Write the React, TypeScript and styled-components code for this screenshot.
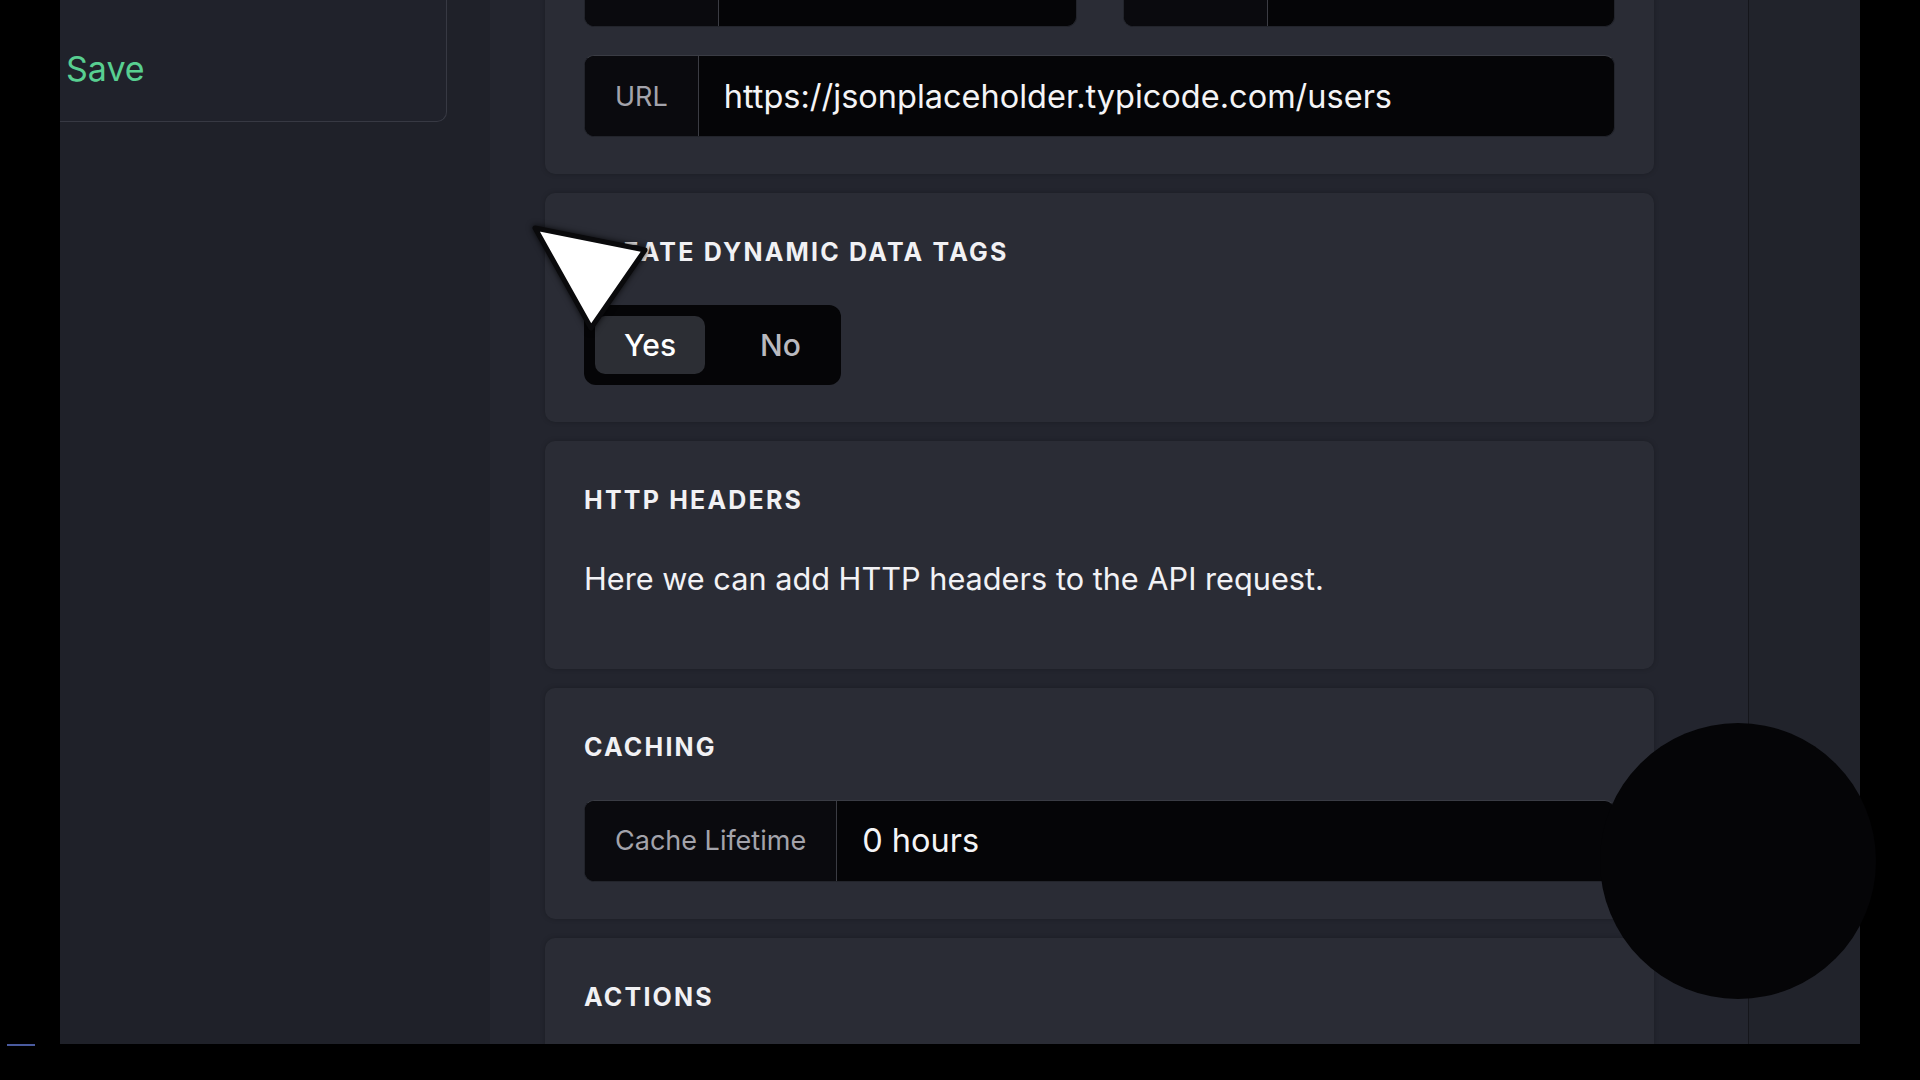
import React from "react";
import styled, { createGlobalStyle } from "styled-components";

const Global = createGlobalStyle`
  html, body { margin: 0; padding: 0; background: #000; }
  body { font-family: Inter, "Noto Sans", "Liberation Sans", sans-serif; color: #f2f2f4; overflow: hidden; }
  * { box-sizing: border-box; }
`;

const Screen = styled.div`
  width: 1920px;
  height: 1080px;
  background: #000;
  position: relative;
  overflow: hidden;
`;

const Frame = styled.div`
  display: flex;
  margin-left: 60px;
  width: 1800px;
  height: 1044px;
  overflow: hidden;
`;

const Sidebar = styled.aside`
  width: 430px;
  flex: none;
  background: #1f2129;
`;

const SidebarCard = styled.div`
  width: 387px;
  height: 122px;
  display: flex;
  align-items: flex-end;
  padding: 0 0 35px 6px;
  background: #20222b;
  border-right: 1.5px solid #373943;
  border-bottom: 1.5px solid #373943;
  border-bottom-right-radius: 10px;
`;

const SaveLink = styled.span`
  font-size: 34px;
  line-height: 1;
  color: #58cf91;
  font-weight: 400;
`;

const Main = styled.main`
  width: 1259px;
  flex: none;
  background: #23252e;
  border-right: 1px solid #15161b;
  padding: 0 94px 0 55px;
  overflow: hidden;
`;

const RightPanel = styled.div`
  flex: 1;
  background: #21232b;
`;

const Stack = styled.div`
  display: flex;
  flex-direction: column;
  gap: 19px;
  margin-top: -94px;
`;

const Card = styled.section<{ $top?: number; $minHeight?: number }>`
  background: #2a2c35;
  border-radius: 10px;
  box-shadow: 0 0 5px rgba(0, 0, 0, 0.22);
  padding: ${(p) => p.$top ?? 47}px 39px 37px;
  min-height: ${(p) => p.$minHeight ?? 0}px;
  display: flex;
  flex-direction: column;
`;

const Heading = styled.h2<{ $gap?: number }>`
  margin: 0 0 ${(p) => p.$gap ?? 40}px;
  font-size: 25px;
  line-height: 1;
  font-weight: 700;
  letter-spacing: 2.2px;
  color: #f1f1f4;
  text-transform: uppercase;
`;

const Description = styled.p`
  margin: 51px 0 37px;
  font-size: 30.7px;
  line-height: 1;
  color: #f2f2f5;
`;

const Row = styled.div`
  display: grid;
  grid-template-columns: 1fr 1fr;
  gap: 46px;
  margin-bottom: 28px;
`;

const InputGroup = styled.div`
  flex: none;
  display: flex;
  height: 82px;
  background: #050507;
  border-radius: 10px;
  border: 1px solid #22242b;
  border-top-color: #3a3c44;
  overflow: hidden;
`;

const GroupLabel = styled.span<{ $width?: number }>`
  display: flex;
  align-items: center;
  padding: 0 30px;
  ${(p) => (p.$width ? `width: ${p.$width}px;` : "")}
  background: #0a0a0e;
  border-right: 1px solid #3b3c43;
  color: #a3a3ab;
  font-size: 27px;
  flex: none;
`;

const GroupValue = styled.span`
  display: flex;
  align-items: center;
  padding-left: 25px;
  font-size: 32.5px;
  color: #f4f4f6;
  white-space: nowrap;
`;

const Toggle = styled.div`
  display: inline-flex;
  align-self: flex-start;
  gap: 26px;
  height: 80px;
  padding: 11px;
  background: #050507;
  border-radius: 12px;
`;

const ToggleButton = styled.button<{ $active?: boolean }>`
  border: none;
  height: 58px;
  padding: 0 29px;
  border-radius: 10px;
  font-family: inherit;
  font-size: 30px;
  font-weight: 500;
  background: ${(p) => (p.$active ? "#2c2e34" : "transparent")};
  color: ${(p) => (p.$active ? "#ffffff" : "#b9b9bf")};
`;

const BottomBar = styled.div`
  height: 36px;
  padding-left: 7px;
`;

const BlueTick = styled.div`
  width: 28px;
  height: 2px;
  background: #4a5b9e;
`;

const Blob = styled.div`
  position: absolute;
  left: 1600px;
  top: 723px;
  width: 276px;
  height: 276px;
  border-radius: 50%;
  background: #050507;
`;

const Cursor = styled.svg`
  position: absolute;
  left: 515px;
  top: 210px;
  width: 150px;
  height: 140px;
  filter: drop-shadow(0 0 3px rgba(0, 0, 0, 0.8));
`;

export default function App() {
  return (
    <Screen>
      <Global />
      <Frame>
        <Sidebar>
          <SidebarCard>
            <SaveLink>Save</SaveLink>
          </SidebarCard>
        </Sidebar>
        <Main>
          <Stack>
            <Card $top={39}>
              <Row>
                <InputGroup>
                  <GroupLabel $width={134} />
                  <GroupValue />
                </InputGroup>
                <InputGroup>
                  <GroupLabel $width={144} />
                  <GroupValue />
                </InputGroup>
              </Row>
              <InputGroup>
                <GroupLabel>URL</GroupLabel>
                <GroupValue>https://jsonplaceholder.typicode.com/users</GroupValue>
              </InputGroup>
            </Card>
            <Card>
              <Heading>Create Dynamic Data Tags</Heading>
              <Toggle>
                <ToggleButton $active>Yes</ToggleButton>
                <ToggleButton>No</ToggleButton>
              </Toggle>
            </Card>
            <Card>
              <Heading $gap={0}>HTTP Headers</Heading>
              <Description>Here we can add HTTP headers to the API request.</Description>
            </Card>
            <Card>
              <Heading>Caching</Heading>
              <InputGroup>
                <GroupLabel>Cache Lifetime</GroupLabel>
                <GroupValue>0 hours</GroupValue>
              </InputGroup>
            </Card>
            <Card $minHeight={220}>
              <Heading>Actions</Heading>
            </Card>
          </Stack>
        </Main>
        <RightPanel />
      </Frame>
      <BottomBar>
        <BlueTick />
      </BottomBar>
      <Blob />
      <Cursor viewBox="0 0 150 140">
        <path
          d="M20 18 L130 40 L76 118 Z"
          fill="#ffffff"
          stroke="#0a0a0c"
          strokeWidth="5"
          strokeLinejoin="round"
        />
      </Cursor>
    </Screen>
  );
}
